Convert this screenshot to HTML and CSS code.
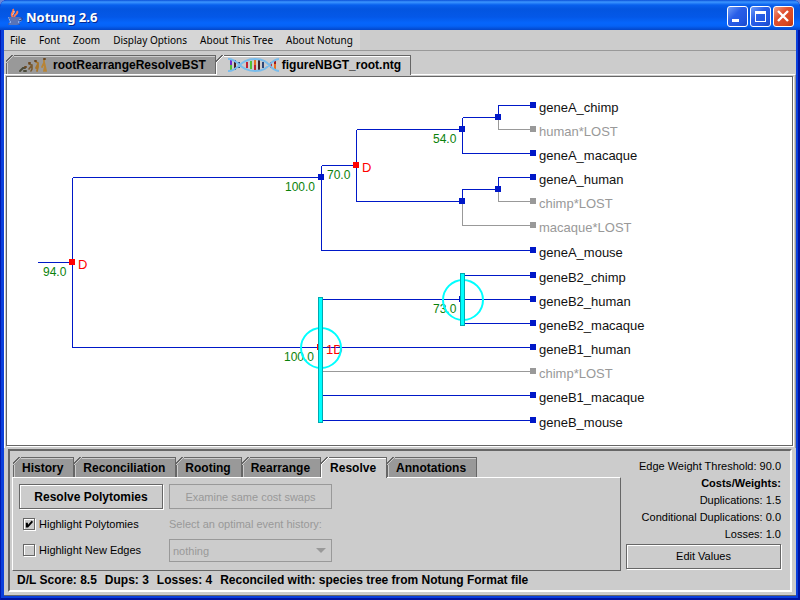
FILE: index.html
```html
<!DOCTYPE html>
<html lang="en">
<head>
<meta charset="utf-8">
<title>Notung 2.6</title>
<link rel="stylesheet" href="styles.css">
</head>
<body>
<div class="window">
  <header class="titlebar">
    <svg class="java" width="16" height="18" viewBox="0 0 16 18" aria-hidden="true">
      <path d="M1 9h11l3 1v3l-3 1 1 2-3 1H2l-1-1 2-2z" fill="#b8c4e4" opacity=".75"/>
      <path d="M6 9C2 6 8 4 6 1M8 9c-2-2 4-3 2-6" fill="none" stroke="#ff7a4c" stroke-width="2"/>
      <path d="M6 7c-1-1 2-2 1-4" fill="none" stroke="#ffe0d0" stroke-width="1"/>
      <path d="M2 10h10M3 12h9M4 14h7M12 10h3v2l-3 1M1 16h12" fill="none" stroke="#283c84" stroke-width="1"/>
    </svg>
    <h1>Notung 2.6</h1>
    <div class="controls">
      <button class="ctl" aria-label="Minimize"><svg width="19" height="19"><rect x="4" y="12" width="7" height="3" fill="#fff"/></svg></button>
      <button class="ctl" aria-label="Maximize"><svg width="19" height="19"><path d="M4 4h11v11H4zM5 7v7h9V7z" fill="#fff" fill-rule="evenodd"/></svg></button>
      <button class="ctl close" aria-label="Close"><svg width="19" height="19"><path d="M4 4l10 10M14 4L4 14" stroke="#fff" stroke-width="2.4"/></svg></button>
    </div>
  </header>

  <div class="client">
  <nav class="menubar">
    <button>File</button><button>Font</button><button>Zoom</button><button>Display Options</button><button>About This Tree</button><button>About Notung</button>
  </nav>

  <div class="tabs files" role="tablist">
    <button class="tab" role="tab">
      <svg width="32" height="16" viewBox="0 0 32 16" aria-hidden="true">
        <g fill="none" stroke-linecap="round">
          <path d="M2 14l3-3 2 0M6 14h2" stroke="#4c4c3c" stroke-width="2"/>
          <path d="M11 7l3 1v4l-1 2M14 8l-3 4" stroke="#7a5a30" stroke-width="1.6"/>
          <path d="M18 5l2 1v4l-1 4M20 7l-2 4" stroke="#a87428" stroke-width="1.8"/>
          <path d="M26 3v2l1 4-1 5M26 6l-2 4M27 9l1 5" stroke="#b88434" stroke-width="1.8"/>
          <path d="M7 10h1M11 6h1M17 4h1M26 2h1" stroke="#6c4820" stroke-width="2"/>
        </g>
      </svg>
      rootRearrangeResolveBST</button>
    <button class="tab active" role="tab" aria-selected="true">
      <svg width="51" height="16" viewBox="0 0 51 16" aria-hidden="true">
        <g stroke-width="2" fill="none">
          <path d="M3 2v6" stroke="#7028d0"/><path d="M3 8v6M23 4v8" stroke="#50c038"/>
          <path d="M7 3v10M31 3v10" stroke="#402028"/><path d="M11 5v6M35 5v6" stroke="#304878"/>
          <path d="M19 5v6M27 8v6M43 5v6" stroke="#c02030"/><path d="M27 2v6M47 7v6" stroke="#e87020"/>
          <path d="M47 3v4" stroke="#a01820"/>
        </g>
        <g fill="none" stroke="#78bcec" stroke-width="2">
          <path class="strand" d="M0 2C10 1 11 14 27 14S40 3 51 2M0 14C10 15 11 2 27 2S40 13 51 14"/>
        </g>
      </svg>
      figureNBGT_root.ntg</button>
  </div>

  <main class="view">
    <svg class="tree" role="img" aria-label="Reconciled gene tree">
      <g transform="translate(-7 -77)">
        <g class="edges" transform="translate(.5 .5)">
          <path d="M37 262H72M72 177V347M72 177H321M321 165V250H532M321 165H356M356 129V201M356 129H462M462 117V153H532M462 117H498M498 117V105H532M356 201H462M462 201V189H498M498 189V177H532"/>
          <path d="M72 347H532M321 299H532M462 275H532M462 323H532M321 395H532M321 420H532"/>
          <path class="lost" d="M498 119V129H532M498 191V201H532M462 203V225H532M321 371H532"/>
        </g>
        <g class="node">
          <rect x="318" y="174" width="6" height="6"/><rect x="459" y="126" width="6" height="6"/><rect x="495" y="114" width="6" height="6"/>
          <rect x="459" y="198" width="6" height="6"/><rect x="495" y="186" width="6" height="6"/><rect x="459" y="296" width="6" height="6"/>
          <rect x="530" y="102" width="6" height="6"/><rect x="530" y="150" width="6" height="6"/><rect x="530" y="174" width="6" height="6"/>
          <rect x="530" y="247" width="6" height="6"/><rect x="530" y="272" width="6" height="6"/><rect x="530" y="296" width="6" height="6"/>
          <rect x="530" y="320" width="6" height="6"/><rect x="530" y="344" width="6" height="6"/><rect x="530" y="392" width="6" height="6"/>
          <rect x="530" y="417" width="6" height="6"/>
        </g>
        <g class="node gone">
          <rect x="530" y="126" width="6" height="6"/><rect x="530" y="198" width="6" height="6"/><rect x="530" y="222" width="6" height="6"/><rect x="530" y="368" width="6" height="6"/>
        </g>
        <g class="node dup">
          <rect x="69" y="259" width="6" height="6"/><rect x="353" y="162" width="6" height="6"/><rect x="317" y="344" width="6" height="6"/>
        </g>
        <g class="leaf">
          <text x="539" y="112">geneA_chimp</text><text class="off" x="539" y="136">human*LOST</text>
          <text x="539" y="160">geneA_macaque</text><text x="539" y="184">geneA_human</text>
          <text class="off" x="539" y="208">chimp*LOST</text><text class="off" x="539" y="232">macaque*LOST</text>
          <text x="539" y="257">geneA_mouse</text><text x="539" y="282">geneB2_chimp</text>
          <text x="539" y="306">geneB2_human</text><text x="539" y="330">geneB2_macaque</text>
          <text x="539" y="354">geneB1_human</text><text class="off" x="539" y="378">chimp*LOST</text>
          <text x="539" y="402">geneB1_macaque</text><text x="539" y="427">geneB_mouse</text>
        </g>
        <g class="weight">
          <text x="43" y="276">94.0</text><text x="285" y="191">100.0</text><text x="327" y="179">70.0</text>
          <text x="433" y="143">54.0</text><text x="433" y="313">73.0</text><text x="284" y="361">100.0</text>
        </g>
        <g class="event">
          <text x="78" y="269">D</text><text x="362" y="172">D</text><text x="326" y="354">1D</text>
        </g>
        <g class="poly">
          <circle cx="321" cy="348" r="20"/><circle cx="463" cy="300" r="20"/>
          <g transform="translate(.5 .5)"><rect x="318" y="297" width="4" height="125"/><rect x="460" y="273" width="4" height="52"/></g>
        </g>
      </g>
    </svg>
  </main>

  <section class="dock">
    <div class="work">
      <div class="tabs" role="tablist">
        <button class="tab" role="tab">History</button><button class="tab" role="tab">Reconciliation</button><button class="tab" role="tab">Rooting</button><button class="tab" role="tab">Rearrange</button><button class="tab active" role="tab" aria-selected="true">Resolve</button><button class="tab" role="tab">Annotations</button>
      </div>
      <div class="panel">
        <button class="btn strong">Resolve Polytomies</button>
        <button class="btn" disabled>Examine same cost swaps</button>
        <label class="check"><input type="checkbox" checked>Highlight Polytomies</label>
        <label class="dim" for="history">Select an optimal event history:</label>
        <label class="check"><input type="checkbox">Highlight New Edges</label>
        <div class="combo"><select id="history" disabled><option>nothing</option></select></div>
      </div>
    </div>
    <aside class="costs">
      <p>Edge Weight Threshold: 90.0</p>
      <p><b>Costs/Weights:</b></p>
      <p>Duplications: 1.5</p>
      <p>Conditional Duplications: 0.0</p>
      <p>Losses: 1.0</p>
      <button class="btn">Edit Values</button>
    </aside>
    <footer class="status"><span>D/L Score: 8.5</span><span>Dups: 3</span><span>Losses: 4</span><span>Reconciled with: species tree from Notung Format file</span></footer>
  </section>
  </div>
</div>
</body>
</html>
```
FILE: styles.css
```css
* { box-sizing: border-box; }
body { margin: 0; background: #6a86d8; font: 11px "Liberation Sans", Arial, sans-serif; color: #000; }
button, select, input { font: inherit; color: inherit; margin: 0; }
p, h1 { margin: 0; }

.window {
  display: flex; flex-direction: column; height: 100vh; min-height: 400px;
  padding: 0 4px 4px; border-radius: 7px 7px 0 0; overflow: hidden;
  background: #0a3fdc; box-shadow: inset 1px 0 #0019b0, inset -2px -2px #0014a0;
}
.titlebar {
  flex: none; display: flex; align-items: center; height: 30px; margin: 0 -4px; padding: 3px 6px 0 7px;
  background: linear-gradient(#0a4fd8 0, #3c96ff 2px, #0860ee 5px, #0355e0 9px, #0458e8 17px, #0566fc 23px, #0562f6 26px, #0346c8 30px);
}
.titlebar h1 { margin-left: 3px; font: bold 13px "Noto Sans", sans-serif; color: #fff; text-shadow: 1px 1px #062a90; }
.controls { display: flex; gap: 2px; margin-left: auto; }
.ctl {
  width: 21px; height: 21px; padding: 0; border: 1px solid #fff; border-radius: 3px;
  background: linear-gradient(135deg, #6f9cf8, #2a5fe8 40%, #2256e0 75%, #1a48c8);
}
.ctl svg { display: block; }
.close { background: linear-gradient(135deg, #f0a088, #e05030 40%, #d84820 75%, #b83410); }

.client {
  flex: 1; min-height: 0; display: flex; flex-direction: column;
  background: #ccc; border-bottom: 1px solid #666;
}
.menubar { flex: none; display: flex; height: 21px; border-bottom: 1px solid #999; }
.menubar button { padding: 0 7px 0 6px; border: 0; background: #d6d6d6; font: 10px "Noto Sans", sans-serif; }

.tabs { display: flex; padding-left: 1px; }
.tab {
  position: relative; display: flex; align-items: center; height: 20px; padding: 1px 10px 0 9px; border: 0;
  border-right: 1px solid #666; font-weight: bold; font-size: 12px; white-space: nowrap;
  background:
    linear-gradient(135deg, #ccc 4px, #666 4px, #666 5px, #ccc 5px, #ccc 6px, #999 6px) 0 0 / 8px 8px no-repeat,
    linear-gradient(#666 1px, #ccc 1px, #ccc 2px, transparent 2px),
    linear-gradient(90deg, #666 1px, #ccc 1px, #ccc 2px, #999 2px);
}
.tab.active {
  margin-bottom: -1px; padding-bottom: 1px; height: 21px;
  background:
    linear-gradient(135deg, #ccc 4px, #666 4px, #666 5px, #fff 5px, #fff 6px, #ccc 6px) 0 0 / 8px 8px no-repeat,
    linear-gradient(#666 1px, #fff 1px, #fff 2px, transparent 2px),
    linear-gradient(90deg, #fff 1px, #ccc 1px);
}
.files { flex: none; padding: 4px 2px 0; }
.files .tab { height: 19px; gap: 3px; padding-right: 9px; padding-left: 12px; }
.files .tab.active { height: 20px; }

.view {
  flex: 1; min-height: 0; display: flex; padding: 1px 2px 2px 1px;
  border: 1px solid #fff; border-width: 1px 1px 0; border-right-color: #999;
}
.tree {
  flex: 1; min-width: 0; height: 100%; display: block; background: #fff;
  border: 1px solid #666; box-shadow: 1px 1px #fff;
}
.tree path { fill: none; stroke: #0018c8; shape-rendering: crispEdges; }
.tree path.lost { stroke: #999; }
.node { fill: #0018c8; }
.node.gone { fill: #999; }
.node.dup { fill: #f00; }
.leaf { font-size: 13px; fill: #111; }
.leaf .off { fill: #999; }
.weight { font-size: 12px; fill: #0a820a; }
.event { font-size: 13px; fill: #f00; }
.poly circle { fill: none; stroke: #0ff; stroke-width: 2; }
.poly rect { fill: #0ff; stroke: #00aab0; shape-rendering: crispEdges; }

.dock {
  flex: none; display: grid; grid-template-columns: 1fr 155px; column-gap: 5px;
  padding: 6px 9px 2px 2px; margin: 1px 4px 3px;
  border: 2px solid; border-color: #666 #fff #fff #666;
}
.panel {
  display: grid; grid-template-columns: 144px 163px; gap: 0 6px; align-content: start; align-items: center;
  grid-template-rows: 25px 30px 22px; height: 94px; padding: 6px;
  border: 1px solid; border-color: #fff #666 #666 #fff;
}
.btn {
  height: 25px; padding: 0; background: #ccc; border: 1px solid #666;
  box-shadow: inset 1px 1px #fff, 1px 1px #fff; font-size: 11px;
}
.btn.strong { font-weight: bold; font-size: 12px; }
.btn:disabled { border-color: #999; color: #999; box-shadow: none; }
.dim { color: #999; }
.check { display: flex; align-items: center; gap: 4px; padding-left: 4px; }
.check input {
  appearance: none; position: relative; width: 12px; height: 12px;
  border: 1px solid #666; box-shadow: inset 1px 1px #fff, 1px 1px #fff;
}
.check input:checked::after {
  content: ""; position: absolute; inset: 1px; background: #000;
  clip-path: polygon(10% 35%, 35% 35%, 38% 60%, 85% 5%, 100% 25%, 38% 95%, 10% 95%);
}
.combo { position: relative; height: 23px; align-self: start; }
.combo select {
  appearance: none; width: 100%; height: 100%; padding: 0 3px; border: 1px solid #999; border-radius: 0;
  background: #ccc; color: #999; opacity: 1;
}
.combo::after {
  content: ""; position: absolute; right: 6px; top: 9px; width: 10px; height: 5px; background: #999;
  clip-path: polygon(0 0, 100% 0, 50% 100%);
}
.costs { display: flex; flex-direction: column; padding-top: 1px; line-height: 17px; text-align: right; }
.costs .btn { margin-top: 1px; flex: none; }
.status { grid-column: 1 / -1; display: flex; gap: 8px; padding: 1px 5px 0; font-weight: bold; font-size: 12px; line-height: 16px; }
```
